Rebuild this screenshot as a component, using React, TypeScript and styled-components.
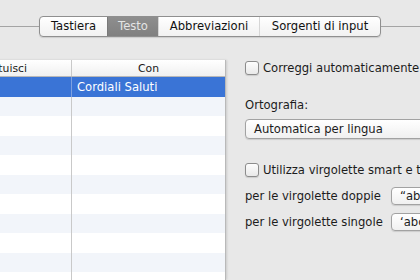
import styled, { createGlobalStyle } from 'styled-components'

const Global = createGlobalStyle`
  html, body {
    margin: 0;
    padding: 0;
    background: #e8e8e8;
    overflow: hidden;
  }
  body {
    width: 420px;
    height: 280px;
    font-family: "DejaVu Sans", "Noto Sans", sans-serif;
    font-size: 11.6px;
    color: #1c1c1c;
  }
`

const Window = styled.div`
  display: flex;
  flex-direction: column;
  width: 420px;
  height: 280px;
  overflow: hidden;
`

const TabStrip = styled.div`
  display: flex;
  align-items: center;
  margin-top: 17px;
  height: 19px;
`

const Rule = styled.div`
  flex: 1;
  height: 1px;
  background: #a4a4a4;
`

const Tabs = styled.div`
  display: flex;
  height: 19px;
  border: 1px solid #8f8f8f;
  border-radius: 4px;
  overflow: hidden;
  background: linear-gradient(#ffffff, #f1f1f1);
  box-shadow: 0 1px 1px rgba(0, 0, 0, 0.12);
`

const Tab = styled.div<{ $active?: boolean; $w: number }>`
  width: ${p => p.$w}px;
  display: flex;
  align-items: center;
  justify-content: center;
  line-height: 19px;
  border-left: 1px solid ${p => (p.$active ? '#7a7a7a' : '#d6d6d6')};
  background: ${p => (p.$active ? 'linear-gradient(#8e8e8e, #808080)' : 'transparent')};
  color: ${p => (p.$active ? '#e4e4e4' : '#111')};
  box-sizing: border-box;
  white-space: nowrap;

  &:first-child {
    border-left: none;
  }
`

const Content = styled.div`
  display: flex;
  margin-top: 24px;
  flex: 1;
  min-height: 0;
`

const TablePane = styled.div`
  margin-left: -72px;
  width: 297px;
  flex-shrink: 0;
  background: #fff;
  border-right: 1px solid #b9b9b9;
  box-shadow: 1px 0 2px rgba(0, 0, 0, 0.12);
  display: flex;
  flex-direction: column;
  overflow: hidden;
`

const Row = styled.div<{ $header?: boolean; $selected?: boolean; $alt?: boolean }>`
  display: grid;
  grid-template-columns: 144px 1fr;
  height: ${p => (p.$header ? '16px' : '19.5px')};
  flex-shrink: 0;
  background: ${p =>
    p.$header
      ? 'linear-gradient(#ffffff, #f0f0f0)'
      : p.$selected
        ? '#3a74d6'
        : p.$alt
          ? '#f2f5fa'
          : '#ffffff'};
  border-bottom: ${p => (p.$header ? '1px solid #b8b8b8' : 'none')};
  color: ${p => (p.$selected ? '#fff' : '#1a1a1a')};
`

const Cell = styled.div<{ $header?: boolean; $selected?: boolean }>`
  display: flex;
  align-items: center;
  justify-content: ${p => (p.$header ? 'center' : 'flex-start')};
  padding-left: ${p => (p.$header ? '0' : '5px')};
  font-size: ${p => (p.$header ? '10.8px' : '11.6px')};
  border-right: 1px solid ${p => (p.$selected ? '#7ea1e0' : '#c9c9c9')};
  white-space: nowrap;
  overflow: hidden;

  &:last-child {
    border-right: none;
  }
`

const Options = styled.div`
  margin-left: 19px;
  display: flex;
  flex-direction: column;
  white-space: nowrap;
`

const CheckRow = styled.label<{ $top: number }>`
  display: flex;
  align-items: center;
  gap: 4px;
  margin-top: ${p => p.$top}px;
  height: 14px;
`

const Box = styled.span`
  width: 12px;
  height: 12px;
  flex-shrink: 0;
  border: 1px solid #8c8c8c;
  border-radius: 3px;
  background: linear-gradient(#fdfdfd, #e9e9e9);
  box-shadow: 0 1px 1px rgba(0, 0, 0, 0.12);
`

const Label = styled.div<{ $top: number }>`
  margin-top: ${p => p.$top}px;
  line-height: 16px;
`

const Popup = styled.div<{ $top: number }>`
  margin-top: ${p => p.$top}px;
  height: 18px;
  width: 240px;
  padding-left: 8px;
  display: flex;
  align-items: center;
  border: 1px solid #a2a2a2;
  border-radius: 4px;
  background: linear-gradient(#ffffff, #f0f0f0);
  box-shadow: 0 1px 1px rgba(0, 0, 0, 0.12);
`

const QuoteRow = styled.div<{ $top: number }>`
  display: flex;
  align-items: center;
  margin-top: ${p => p.$top}px;
  height: 18px;
`

const QuoteText = styled.span`
  width: 146px;
`

const QuoteBox = styled.div`
  height: 16px;
  width: 60px;
  padding-left: 8px;
  display: flex;
  align-items: center;
  border: 1px solid #a2a2a2;
  border-radius: 4px;
  background: linear-gradient(#ffffff, #f0f0f0);
  box-shadow: 0 1px 1px rgba(0, 0, 0, 0.12);
`

const rows = Array.from({ length: 10 }, (_, i) => i)

export default function App() {
  return (
    <Window>
      <Global />
      <TabStrip>
        <Rule />
        <Tabs>
          <Tab $w={67}>Tastiera</Tab>
          <Tab $w={51} $active>Testo</Tab>
          <Tab $w={101}>Abbreviazioni</Tab>
          <Tab $w={121}>Sorgenti di input</Tab>
        </Tabs>
        <Rule />
      </TabStrip>

      <Content>
        <TablePane>
          <Row $header>
            <Cell $header>Sostituisci</Cell>
            <Cell $header>Con</Cell>
          </Row>
          <Row $selected>
            <Cell $selected>cds</Cell>
            <Cell $selected>Cordiali Saluti</Cell>
          </Row>
          {rows.map(i => (
            <Row key={i} $alt={i % 2 === 0}>
              <Cell />
              <Cell />
            </Row>
          ))}
        </TablePane>

        <Options>
          <CheckRow $top={1}>
            <Box />
            Correggi automaticamente
          </CheckRow>
          <Label $top={22}>Ortografia:</Label>
          <Popup $top={6}>Automatica per lingua</Popup>
          <CheckRow $top={24}>
            <Box />
            Utilizza virgolette smart e trattini
          </CheckRow>
          <QuoteRow $top={10}>
            <QuoteText>per le virgolette doppie</QuoteText>
            <QuoteBox>“abc”</QuoteBox>
          </QuoteRow>
          <QuoteRow $top={8}>
            <QuoteText>per le virgolette singole</QuoteText>
            <QuoteBox>‘abc’</QuoteBox>
          </QuoteRow>
        </Options>
      </Content>
    </Window>
  )
}
